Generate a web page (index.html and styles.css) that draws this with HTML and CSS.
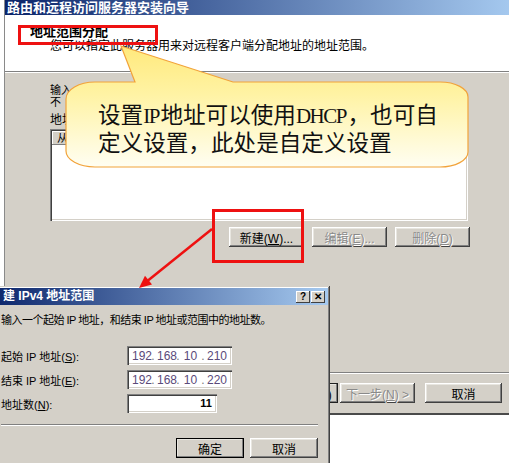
FILE: index.html
```html
<!DOCTYPE html>
<html lang="zh-CN">
<head>
    <meta charset="UTF-8">
    <title>路由和远程访问服务器安装向导</title>
    <link rel="stylesheet" href="styles.css">
</head>
<body>
    <div class="screen">
        <div class="wizard">
            <div class="titlebar">路由和远程访问服务器安装向导</div>
            <div class="wz-header">
                <div class="wz-title">地址范围分配</div>
                <div class="wz-sub">您可以指定此服务器用来对远程客户端分配地址的地址范围。</div>
            </div>
            <div class="wz-body">
                <p class="line">输入</p>
                <p class="line">不</p>
                <p class="label">地址</p>
                <div class="listbox">
                    <div class="list-head">
                        <span class="col">从</span>
                    </div>
                </div>
                <div class="btn-row">
                    <button class="btn">新建(<u>W</u>)...</button>
                    <button class="btn off">编辑(<u>E</u>)...</button>
                    <button class="btn off">删除(<u>D</u>)</button>
                </div>
            </div>
            <div class="wz-footer">
                <button class="btn focus">&lt; 上一步(<u>B</u>)</button>
                <button class="btn off">下一步(<u>N</u>) &gt;</button>
                <button class="btn cancel">取消</button>
            </div>
        </div>

        <svg class="callout-shape" width="509" height="463" viewBox="0 0 509 463">
            <defs>
                <linearGradient id="tip" x1="0" y1="46" x2="0" y2="167" gradientUnits="userSpaceOnUse">
                    <stop offset="0" stop-color="#ffe97c"/>
                    <stop offset="0.4" stop-color="#fff3a4"/>
                    <stop offset="1" stop-color="#fffef2"/>
                </linearGradient>
            </defs>
            <path d="M121 46 L233 82 L440 82 A28 15 0 0 1 468 97 L468 152 A28 15 0 0 1 440 167 L95 167 A29 16 0 0 1 66 151 L66 99 A29 17 0 0 1 95 82 L135 82 Z"
                  fill="url(#tip)" stroke="#f2a33a" stroke-width="1.2"/>
        </svg>
        <div class="callout-text">
            <div>设置<span class="lat">IP</span>地址可以使用<span class="lat">DHCP</span>，也可自</div>
            <div>定义设置，此处是自定义设置</div>
        </div>

        <div class="dialog">
            <div class="titlebar small">
                <span>建 IPv4 地址范围</span>
                <span class="tb-btns">
                    <span class="tb-btn">?</span>
                    <span class="tb-btn">✕</span>
                </span>
            </div>
            <div class="dlg-body">
                <p class="dlg-text">输入一个起始 IP 地址，和结束 IP 地址或范围中的地址数。</p>
                <div class="field-row">
                    <span class="field-label">起始 IP 地址(<u>S</u>):</span>
                    <span class="ipbox">
                        <span class="oct">192</span><span class="dot">.</span><span class="oct">168</span><span class="dot">.</span><span class="oct">10</span><span class="dot">.</span><span class="oct">210</span>
                    </span>
                </div>
                <div class="field-row">
                    <span class="field-label">结束 IP 地址(<u>E</u>):</span>
                    <span class="ipbox">
                        <span class="oct">192</span><span class="dot">.</span><span class="oct">168</span><span class="dot">.</span><span class="oct">10</span><span class="dot">.</span><span class="oct">220</span>
                    </span>
                </div>
                <div class="field-row">
                    <span class="field-label">地址数(<u>N</u>):</span>
                    <span class="numbox">11</span>
                </div>
                <div class="rule"></div>
                <div class="dlg-buttons">
                    <button class="btn default">确定</button>
                    <button class="btn">取消</button>
                </div>
            </div>
        </div>

        <svg class="marks" width="509" height="463" viewBox="0 0 509 463">
            <rect x="19.5" y="26.5" width="137" height="17" fill="none" stroke="#ee1111" stroke-width="3"/>
            <rect x="213.5" y="210.5" width="89" height="51" fill="none" stroke="#ee1111" stroke-width="3"/>
            <line x1="212" y1="229" x2="148" y2="280.5" stroke="#ee1111" stroke-width="2.5"/>
            <polygon points="139,288 152,284.6 145,275.8" fill="#ee1111"/>
        </svg>
    </div>
</body>
</html>
```

FILE: styles.css
```css
body {
    margin: 0;
    background-color: #fff;
    font-family: "Liberation Sans", "Noto Sans CJK SC", sans-serif;
    font-size: 12px;
    color: #000;
}
p {
    margin: 0;
}
.screen {
    position: relative;
    width: 509px;
    height: 463px;
    overflow: hidden;
    background-color: #fff;
}

/* windows on the desktop */
.wizard {
    position: absolute;
    left: 4px;
    top: 0;
    width: 511px;
    height: 415px;
    box-sizing: border-box;
    border-left: 1px solid #8a8a8a;
    border-bottom: 2px solid #4a4a4a;
    background-color: #d4d0c8;
    display: flex;
    flex-direction: column;
}
.titlebar {
    height: 15px;
    line-height: 15px;
    padding-left: 2px;
    background: linear-gradient(to right, #0a246a, #a6caf0);
    color: #fff;
    font-weight: bold;
    font-size: 13px;
    white-space: nowrap;
}
.titlebar.small {
    height: 17px;
    line-height: 17px;
    font-size: 12px;
    padding-left: 13px;
    padding-right: 3px;
    display: flex;
    justify-content: space-between;
    align-items: center;
}
.tb-btns {
    display: flex;
    gap: 1px;
}
.tb-btn {
    width: 14px;
    height: 12px;
    line-height: 12px;
    font-size: 10px;
    text-align: center;
    color: #000;
    background-color: #d4d0c8;
    box-shadow: inset -1px -1px #404040, inset 1px 1px #fff;
}
.wz-header {
    height: 57px;
    background-color: #fff;
    border-bottom: 1px solid #808080;
    padding: 10px 0 0 25px;
    box-sizing: border-box;
    flex: none;
}
.wz-title {
    font-weight: bold;
    font-size: 13px;
    line-height: 14px;
}
.wz-sub {
    line-height: 14px;
    padding-left: 20px;
    white-space: nowrap;
}
.wz-body {
    flex: 1;
    border-top: 1px solid #fff;
    padding: 11px 0 0 45px;
}
.line {
    font-size: 11px;
    line-height: 12px;
    white-space: nowrap;
}
.label {
    line-height: 12px;
    margin-top: 6px;
}
.listbox {
    width: 418px;
    height: 92px;
    margin-top: 3px;
    box-sizing: border-box;
    background-color: #fff;
    padding: 2px;
    box-shadow: inset 1px 1px #808080, inset 2px 2px #404040, inset -1px -1px #fff, inset -2px -2px #d4d0c8;
}
.list-head {
    display: flex;
    height: 14px;
    background-color: #d4d0c8;
}
.col {
    width: 120px;
    line-height: 14px;
    padding-left: 5px;
    font-size: 11px;
    box-shadow: inset -1px -1px #808080, inset 1px 1px #fff;
}
.btn-row {
    width: 420px;
    margin-top: 6px;
    display: flex;
    justify-content: flex-end;
    gap: 8px;
}
.btn {
    width: 75px;
    height: 20px;
    padding: 0;
    border: none;
    font-family: inherit;
    font-size: 12px;
    color: #000;
    background-color: #d4d0c8;
    box-shadow: inset -1px -1px #404040, inset 1px 1px #fff, inset -2px -2px #808080, inset 2px 2px #e8e6e0;
}
.btn u {
    text-decoration: underline;
}
.btn.off {
    color: #8a8a8a;
    text-shadow: 1px 1px #fff;
}
.btn.focus {
    outline: 1px solid #202020;
    outline-offset: -1px;
}
.btn.cancel {
    width: 77px;
}
.wz-footer {
    flex: none;
    border-top: 1px solid #808080;
    box-shadow: inset 0 1px #fff;
    padding: 10px 13px 10px 0;
    display: flex;
    justify-content: flex-end;
    gap: 2px;
}
.wz-footer .cancel {
    margin-left: 8px;
}

/* callout */
.callout-shape {
    position: absolute;
    left: 0;
    top: 0;
}
.callout-text {
    position: absolute;
    left: 98px;
    top: 102px;
    font-family: "Liberation Serif", "Noto Sans CJK SC", serif;
    font-size: 22.6px;
    line-height: 27px;
    color: #111;
    white-space: nowrap;
}
.lat {
    font-size: 21px;
    letter-spacing: -1.5px;
    margin-right: 1.5px;
}

/* dialog */
.dialog {
    position: absolute;
    left: -12px;
    top: 286px;
    width: 342px;
    height: 190px;
    box-sizing: border-box;
    padding: 2px;
    background-color: #d4d0c8;
    box-shadow: inset -1px -1px #404040, inset 1px 1px #d4d0c8, inset -2px -2px #808080, inset 2px 2px #fff;
}
.dlg-body {
    padding: 8px 10px 0 11px;
    font-size: 11px;
}
.dlg-text {
    line-height: 14px;
    white-space: nowrap;
    letter-spacing: -0.5px;
}
.field-row {
    display: flex;
    align-items: center;
    height: 19px;
    margin-top: 5px;
}
.dlg-text + .field-row {
    margin-top: 19px;
}
.field-label {
    width: 126px;
    white-space: nowrap;
}
.ipbox, .numbox {
    height: 19px;
    box-sizing: border-box;
    background-color: #fff;
    box-shadow: inset 1px 1px #808080, inset 2px 2px #404040, inset -1px -1px #fff, inset -2px -2px #d4d0c8;
}
.ipbox {
    width: 105px;
    padding-left: 5px;
    display: flex;
    align-items: center;
    color: #5a4a7a;
    font-size: 12px;
}
.oct {
    width: 17px;
    text-align: center;
}
.dot {
    width: 8px;
    text-align: center;
    color: #777;
}
.numbox {
    width: 90px;
    line-height: 19px;
    padding-right: 5px;
    text-align: right;
    font-weight: bold;
}
.rule {
    margin-top: 11px;
    border-top: 1px solid #808080;
    border-bottom: 1px solid #fff;
}
.dlg-buttons {
    margin-top: 12px;
    display: flex;
    justify-content: flex-end;
    gap: 6px;
}
.dlg-buttons .btn {
    width: 68px;
    font-size: 12px;
}
.btn.default {
    outline: 1px solid #000;
    outline-offset: -1px;
}

/* red annotations */
.marks {
    position: absolute;
    left: 0;
    top: 0;
}
```
